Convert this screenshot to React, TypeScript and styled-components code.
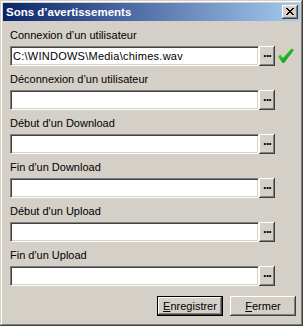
import styled, { createGlobalStyle } from "styled-components";

const GlobalStyle = createGlobalStyle`
  html, body {
    margin: 0;
    padding: 0;
    background: #d4d0c8;
  }
  * {
    box-sizing: border-box;
  }
`;

const Window = styled.div`
  width: 303px;
  height: 326px;
  padding: 3px;
  background: #d4d0c8;
  box-shadow: inset -1px -1px #404040, inset 1px 1px #d4d0c8,
    inset -2px -2px #808080, inset 2px 2px #ffffff;
  display: flex;
  flex-direction: column;
  font-family: "Liberation Sans", Arial, sans-serif;
  font-size: 11px;
  color: #000;
`;

const TitleBar = styled.div`
  height: 18px;
  display: flex;
  align-items: center;
  justify-content: space-between;
  padding: 0 2px 0 3px;
  background: linear-gradient(to right, #0a246a, #a6caf0);
`;

const Title = styled.span`
  color: #fff;
  font-weight: bold;
  font-size: 11.5px;
  line-height: 14px;
`;

const CloseButton = styled.button`
  width: 16px;
  height: 14px;
  padding: 0;
  border: 0;
  background: #d4d0c8;
  box-shadow: inset -1px -1px #404040, inset 1px 1px #ffffff,
    inset -2px -2px #808080, inset 2px 2px #d4d0c8;
  display: flex;
  align-items: center;
  justify-content: center;
  svg {
    display: block;
    margin-top: -1px;
  }
`;

const Body = styled.div`
  flex: 1;
  display: flex;
  flex-direction: column;
  padding: 8px 4px 7px 7px;
`;

const Fields = styled.div`
  display: flex;
  flex-direction: column;
  gap: 7px;
`;

const Field = styled.div`
  display: flex;
  flex-direction: column;
  gap: 4px;
`;

const Label = styled.label`
  line-height: 13px;
  height: 13px;
  white-space: nowrap;
`;

const InputRow = styled.div`
  display: flex;
  align-items: center;
`;

const PathInput = styled.input`
  width: 249px;
  height: 20px;
  padding: 0 2px;
  margin: 0;
  font-family: "Liberation Sans", Arial, sans-serif;
  font-size: 11px;
  letter-spacing: 0.25px;
  color: #000;
  background: #fff;
  border: 1px solid;
  border-color: #808080 #ffffff #ffffff #808080;
  box-shadow: inset 1px 1px #404040, inset -1px -1px #d4d0c8;
  outline: none;
`;

const BrowseButton = styled.button`
  width: 16px;
  height: 20px;
  padding: 0 0 7px;
  margin: 0;
  border: 0;
  background: #d4d0c8;
  box-shadow: inset -1px -1px #404040, inset 1px 1px #ffffff,
    inset -2px -2px #808080, inset 2px 2px #d4d0c8;
  font-family: "Liberation Sans", Arial, sans-serif;
  font-size: 13px;
  line-height: 13px;
  font-weight: bold;
  letter-spacing: -1px;
  color: #000;
  display: flex;
  align-items: center;
  justify-content: center;
`;

const CheckSlot = styled.span`
  width: 16px;
  height: 16px;
  margin-left: 3px;
  display: flex;
  svg {
    display: block;
  }
`;

const Actions = styled.div`
  display: flex;
  justify-content: flex-end;
  gap: 7px;
  margin-top: 10px;
`;

const ActionButton = styled.button<{ $default?: boolean }>`
  width: 66px;
  height: 20px;
  padding: 0;
  margin: 0;
  border: ${(p) => (p.$default ? "1px solid #000" : "0")};
  background: #d4d0c8;
  box-shadow: inset -1px -1px #404040, inset 1px 1px #ffffff,
    inset -2px -2px #808080, inset 2px 2px #d4d0c8;
  font-family: "Liberation Sans", Arial, sans-serif;
  font-size: 11px;
  color: #000;
  u {
    text-decoration-thickness: 1px;
    text-underline-offset: 1px;
  }
`;

const fields = [
  { label: "Connexion d’un utilisateur", value: "C:\\WINDOWS\\Media\\chimes.wav", ok: true },
  { label: "Déconnexion d’un utilisateur", value: "" },
  { label: "Début d'un Download", value: "" },
  { label: "Fin d'un Download", value: "" },
  { label: "Début d'un Upload", value: "" },
  { label: "Fin d'un Upload", value: "" },
];

function CheckMark() {
  return (
    <svg width="16" height="16" viewBox="0 0 16 16">
      <defs>
        <linearGradient id="chk" x1="0" y1="0" x2="1" y2="1">
          <stop offset="0" stopColor="#6ee36e" />
          <stop offset="0.5" stopColor="#1fb51f" />
          <stop offset="1" stopColor="#0a7a0a" />
        </linearGradient>
      </defs>
      <path
        d="M0 8.5 L2.5 6.5 L5 10 L13.5 0.5 L16 2 L6 15 L4.5 15 Z"
        fill="url(#chk)"
      />
    </svg>
  );
}

export default function App() {
  return (
    <>
      <GlobalStyle />
      <Window>
        <TitleBar>
          <Title>Sons d’avertissements</Title>
          <CloseButton aria-label="Fermer">
            <svg width="8" height="7" viewBox="0 0 8 7" shapeRendering="crispEdges">
              <path
                d="M0 0h2v1h-2zM6 0h2v1h-2zM1 1h2v1h-2zM5 1h2v1h-2zM2 2h4v1h-4zM3 3h2v1h-2zM2 4h4v1h-4zM1 5h2v1h-2zM5 5h2v1h-2zM0 6h2v1h-2zM6 6h2v1h-2z"
                fill="#000"
              />
            </svg>
          </CloseButton>
        </TitleBar>
        <Body>
          <Fields>
            {fields.map((f) => (
              <Field key={f.label}>
                <Label>{f.label}</Label>
                <InputRow>
                  <PathInput defaultValue={f.value} />
                  <BrowseButton>...</BrowseButton>
                  {f.ok && (
                    <CheckSlot>
                      <CheckMark />
                    </CheckSlot>
                  )}
                </InputRow>
              </Field>
            ))}
          </Fields>
          <Actions>
            <ActionButton $default>
              <u>E</u>nregistrer
            </ActionButton>
            <ActionButton>
              <u>F</u>ermer
            </ActionButton>
          </Actions>
        </Body>
      </Window>
    </>
  );
}
